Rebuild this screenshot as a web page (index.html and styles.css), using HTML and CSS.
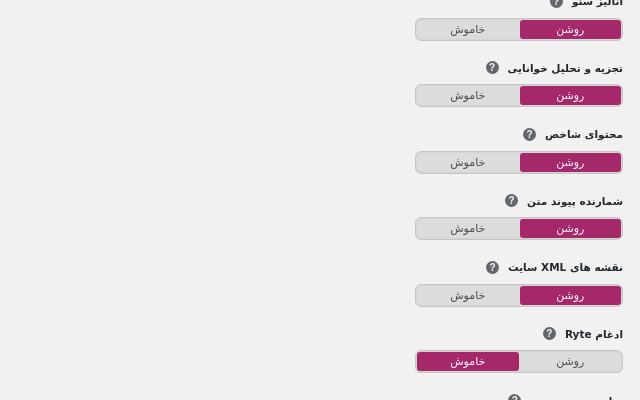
FILE: index.html
```html
<!DOCTYPE html>
<html lang="fa" dir="rtl">
<head>
<meta charset="utf-8">
<title>ویژگی‌ها</title>
<link rel="stylesheet" href="styles.css">
</head>
<body>
<main class="list">
  <section class="row"><h3 class="label"><span>آنالیز سئو</span><i class="help">?</i></h3><div class="toggle"><span class="opt on">روشن</span><span class="opt">خاموش</span></div></section>
  <section class="row"><h3 class="label"><span>تجزیه و تحلیل خوانایی</span><i class="help">?</i></h3><div class="toggle"><span class="opt on">روشن</span><span class="opt">خاموش</span></div></section>
  <section class="row"><h3 class="label"><span>محتوای شاخص</span><i class="help">?</i></h3><div class="toggle"><span class="opt on">روشن</span><span class="opt">خاموش</span></div></section>
  <section class="row"><h3 class="label"><span>شمارنده پیوند متن</span><i class="help">?</i></h3><div class="toggle"><span class="opt on">روشن</span><span class="opt">خاموش</span></div></section>
  <section class="row"><h3 class="label"><span>نقشه های XML سایت</span><i class="help">?</i></h3><div class="toggle"><span class="opt on">روشن</span><span class="opt">خاموش</span></div></section>
  <section class="row"><h3 class="label"><span>ادغام Ryte</span><i class="help">?</i></h3><div class="toggle"><span class="opt">روشن</span><span class="opt on">خاموش</span></div></section>
  <section class="row"><h3 class="label"><span>نوار منوی مدیریت</span><i class="help">?</i></h3></section>
</main>
</body>
</html>
```
FILE: styles.css
```css
html, body {
  margin: 0;
  height: 400px;
  overflow: hidden;
  background: #f1f1f1;
}
body {
  font-family: "DejaVu Sans", sans-serif;
  color: #444;
}
.list {
  margin-top: -9px;
  padding-right: 17px;
  width: 208px;
  filter: blur(0.25px);
}
.row {
  height: 66.6px;
  box-sizing: border-box;
}
.label {
  margin: 0;
  height: 20px;
  display: flex;
  align-items: center;
  gap: 9px;
  font-size: 10.5px;
  font-weight: bold;
  color: #23282d;
  white-space: nowrap;
}
.help {
  width: 13px;
  height: 13px;
  border-radius: 50%;
  background: #63676c;
  color: #f1f1f1;
  font: bold 10px/13px "Liberation Sans", sans-serif;
  text-align: center;
}
.toggle {
  margin-top: 6.5px;
  display: flex;
  gap: 1px;
  height: 23px;
  box-sizing: border-box;
  padding: 1px;
  border: 1px solid #c6c6c6;
  border-radius: 6px;
  background: #dcdcdc;
  box-shadow: inset 0 0 2px rgba(0,0,0,.12);
}
.opt {
  flex: 1;
  font-size: 11px;
  line-height: 20px;
  text-align: center;
  color: #4f4f4f;
}
.opt.on {
  background: #a4286a;
  color: #fbeef5;
  border-radius: 3px;
}
```
